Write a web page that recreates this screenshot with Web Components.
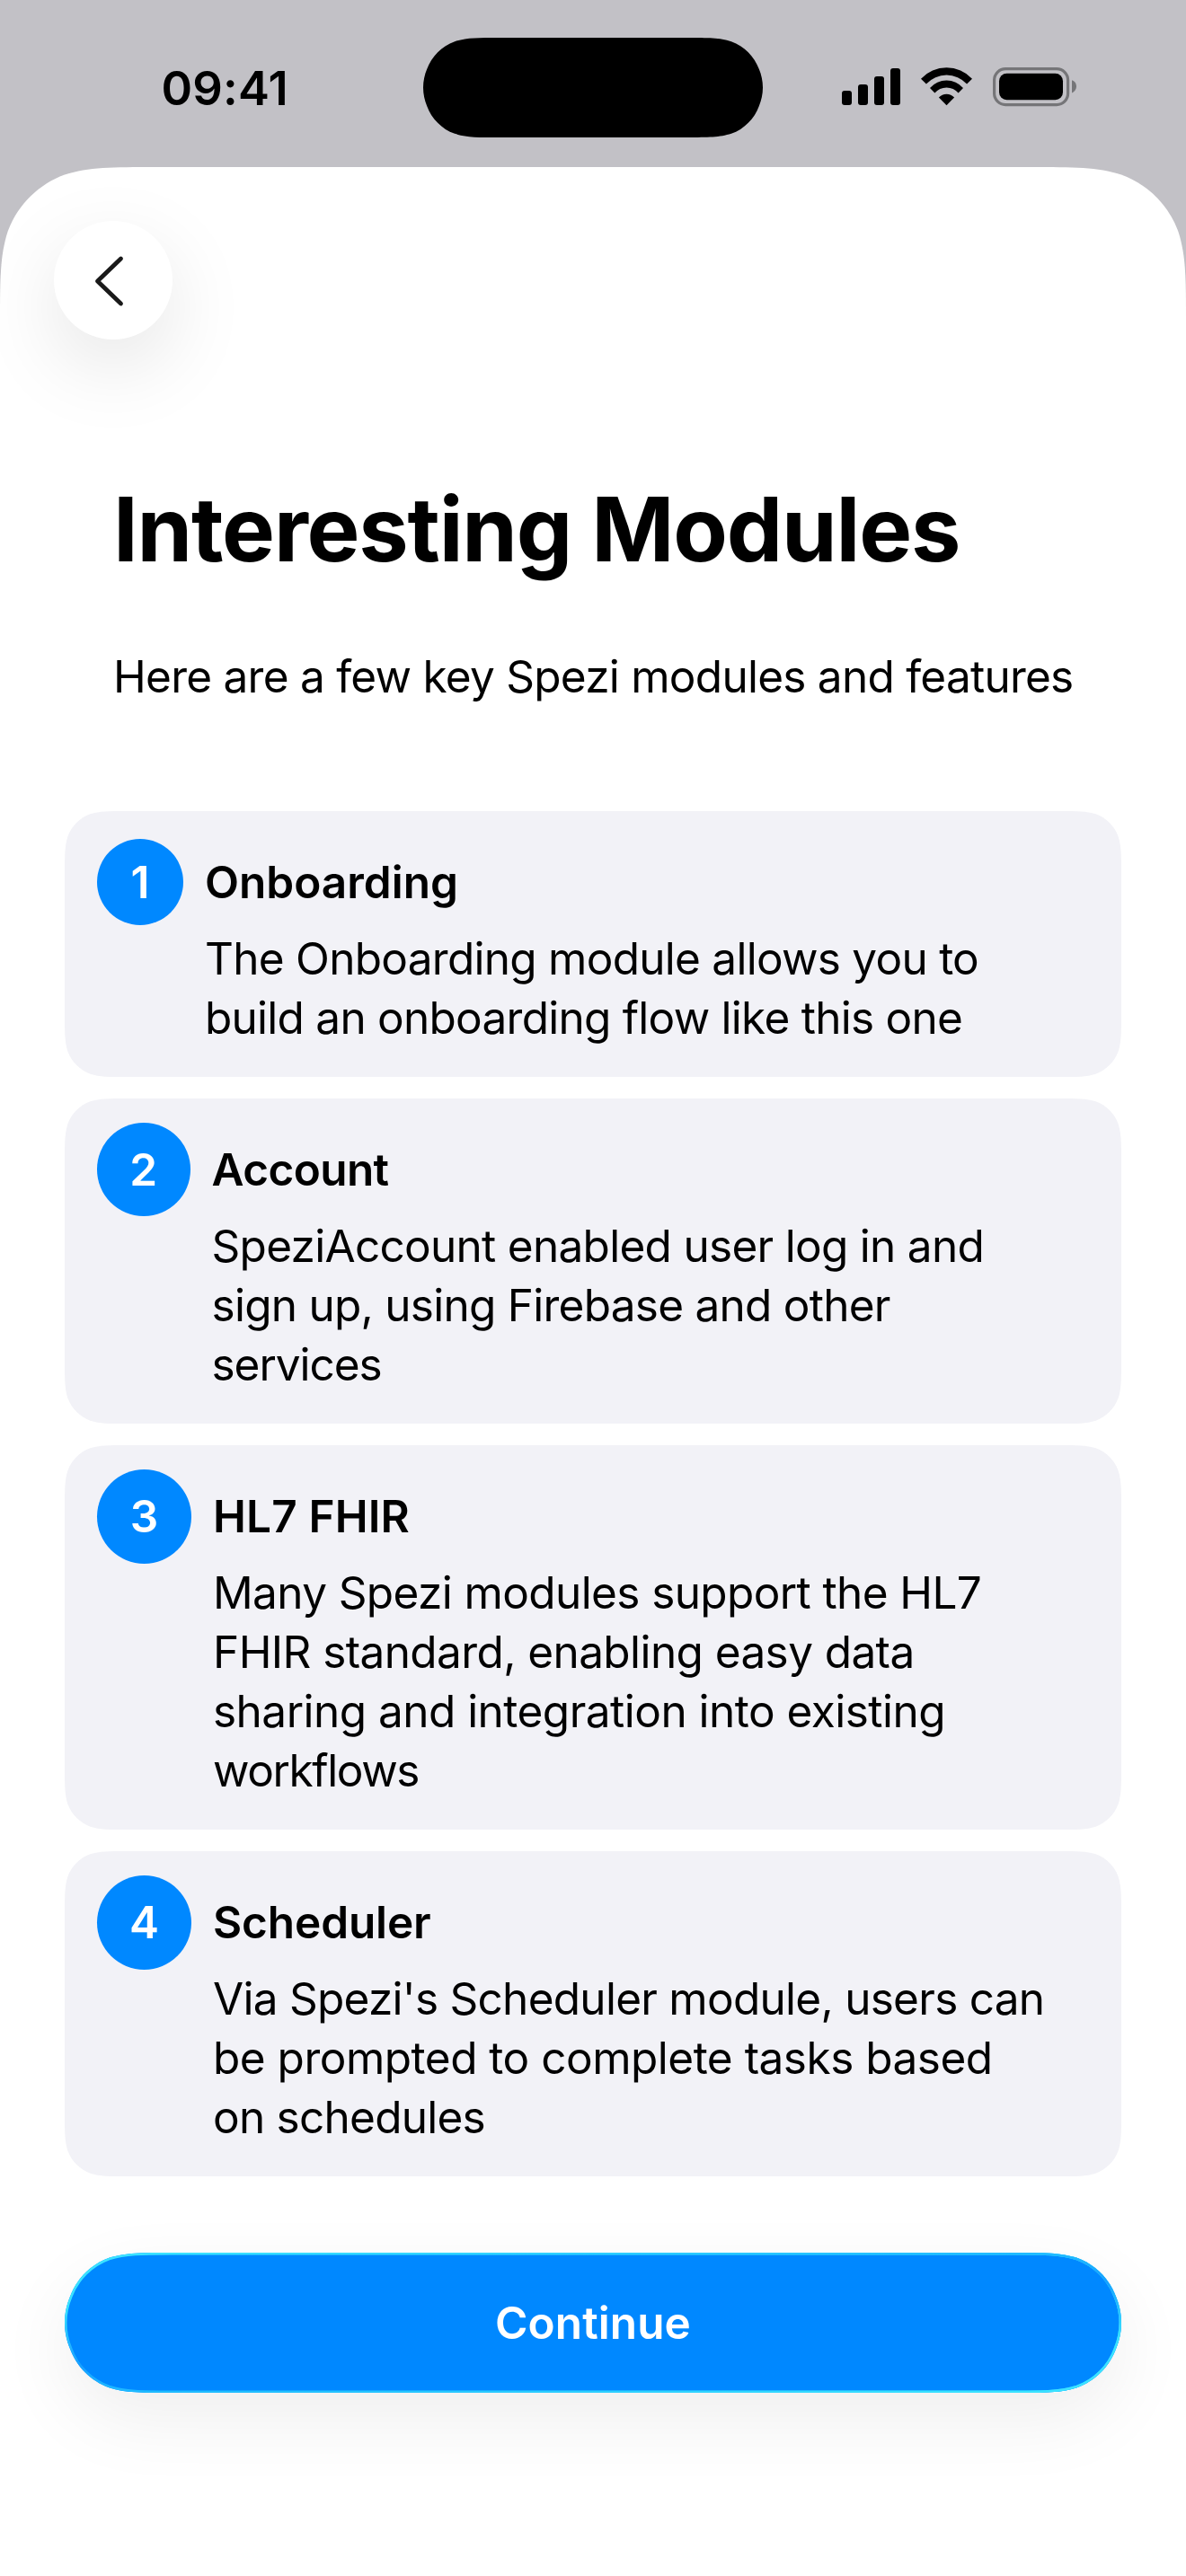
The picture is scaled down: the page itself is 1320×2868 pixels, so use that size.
<!DOCTYPE html>
<html lang="en">
<head>
<meta charset="utf-8">
<title>Interesting Modules</title>
<style>
  html, body { margin: 0; padding: 0; }
  body { width: 1320px; height: 2868px; overflow: hidden; background: #c2c1c6; color: #000;
    font-family: Inter, "Liberation Sans", sans-serif; font-size: 49.5px; line-height: 66px; }
</style>
</head>
<body>
<onboarding-screen></onboarding-screen>
<script>
// Outline of a rounded rectangle with continuous corners.
// When the radius is half the height, the vertical run of each corner stops at the middle.
function smoothPath(w, h, r) {
  const capsule = r * 1.52866483 * 2 > h;
  const e = capsule ? h / 2 : 1.52866483 * r;
  const c1 = capsule ? 0.735 * r : 0.86840694 * r, c2 = capsule ? 0.868 * r : 1.08849296 * r;
  const k = (v) => v * r, n = (v) => +v.toFixed(2);
  const corner = (fx, fy, rev) => {
    const p = [[k(1.52866483), 0], [k(1.08849296), 0], [k(0.86840694), 0], [k(0.63149379), k(0.07491139)],
      [k(0.37282383), k(0.16905956)], [k(0.16905956), k(0.37282383)], [k(0.07491139), k(0.63149379)],
      [capsule ? k(0.03) : 0, c1], [0, c2], [0, e]].map(([x, y]) => `${n(fx(x))} ${n(fy(y))}`);
    if (rev) p.reverse();
    return `${p[0]} C${p.slice(1, 4).join(' ')} C${p.slice(4, 7).join(' ')} C${p.slice(7).join(' ')}`;
  };
  const l = (x) => x, t = (y) => y, R = (x) => w - x, b = (y) => h - y;
  return `M${corner(l, t, true)} L${corner(R, t, false)} L${corner(R, b, true)} L${corner(l, b, false)} Z`;
}

class BaseElement extends HTMLElement {
  constructor() {
    super();
    this.attachShadow({ mode: 'open' }).innerHTML = this.render();
  }
  render() { return ''; }
}

customElements.define('status-bar', class extends BaseElement {
  render() {
    return `<style>
      :host { display: grid; grid-template-columns: 471px 378px 471px; height: 186px; }
      .time { padding: 65px 0 0 179.5px; font-weight: 600; font-size: 52.5px; line-height: 66px; letter-spacing: .2px; }
      .island { padding-top: 42px; }
      .icons { padding: 75px 0 0 88px; }
      svg { display: block; }
    </style>
    <div class="time"><span>09:41</span></div>
    <div class="island"><svg width="378" height="111"><path d="${smoothPath(378, 111, 55.5)}"/></svg></div>
    <div class="icons"><svg width="262" height="44" viewBox="0 0 262 44">
      <rect x="0" y="26" width="11" height="16" rx="3"/>
      <rect x="18" y="19" width="11" height="23" rx="3"/>
      <rect x="36" y="10" width="11" height="32" rx="3"/>
      <rect x="54" y="1" width="11" height="41" rx="3"/>
      <path d="M88 12.7A39 39 0 0 1 145 12.7L139.1 18.4A31 31 0 0 0 93.9 18.4Z"/>
      <path d="M98 23A24.6 24.6 0 0 1 135 23L129.6 28.6A17 17 0 0 0 103.4 28.6Z"/>
      <path d="M107.9 33.6A11.4 11.4 0 0 1 125.1 33.6L116.5 42.2Z"/>
      <rect x="169.6" y="1.6" width="82" height="40" rx="12.5" fill="none" stroke="#757578" stroke-width="3.2"/>
      <rect x="175" y="6.7" width="71" height="29.6" rx="8.5"/>
      <path fill="#757578" d="M256 14.2C259 15 261 18 261 21.3S259 27.2 256 28.4Z"/>
    </svg></div>`;
  }
});

customElements.define('back-button', class extends BaseElement {
  render() {
    return `<style>
      :host { display: flex; width: 132px; height: 132px; border-radius: 50%; background: #fff;
        box-shadow: 0 30px 90px rgba(0,0,0,.1); }
    </style>
    <svg width="132" height="132" fill="none" stroke="#1a1a1a" stroke-width="4.8" stroke-linecap="round" stroke-linejoin="round">
      <path d="M74.5 42L48.5 67L74.5 92"/></svg>`;
  }
});

// One line of text with its own tracking.
customElements.define('text-line', class extends BaseElement {
  render() {
    return `<style>:host { display: block; white-space: nowrap; }</style><slot></slot>`;
  }
  connectedCallback() { this.style.letterSpacing = (this.getAttribute('track') || 0) + 'px'; }
});

customElements.define('module-card', class extends BaseElement {
  render() {
    return `<style>
      :host { display: grid; grid-template: 66px auto / auto 1fr; column-gap: 24px; row-gap: 19px;
        box-sizing: border-box; width: 1176px; padding: 46px 36px 33px; background: #f2f2f7; }
      .badge { display: flex; align-items: center; justify-content: center; align-self: center;
        width: var(--badge); height: var(--badge); border-radius: 50%; background: #08f; color: #fff; font-weight: 600; }
      .title { font-weight: 600; }
      .text { grid-column: 2; }
    </style>
    <div class="badge"><slot name="number"></slot></div>
    <div class="title"><slot name="title"></slot></div>
    <div class="text"><slot></slot></div>`;
  }
  connectedCallback() {
    this.style.setProperty('--badge', this.getAttribute('badge') + 'px');
    const shape = () => { this.style.clipPath = `path("${smoothPath(this.offsetWidth, this.offsetHeight, 45)}")`; };
    new ResizeObserver(shape).observe(this);
  }
});

customElements.define('primary-button', class extends BaseElement {
  render() {
    const d = smoothPath(1176, 156, 78);
    return `<style>
      :host { display: grid; width: 1176px; height: 156px; border-radius: 78px; color: #fff; font-weight: 600;
        box-shadow: 0 30px 84px rgba(0,0,0,.067); }
      svg, .label { grid-area: 1 / 1; }
      .label { display: flex; align-items: center; justify-content: center; }
    </style>
    <svg width="1176" height="156">
      <defs>
        <linearGradient id="left" x1="0" y1="0" x2="0" y2="1">
          <stop offset="0" stop-color="#3be3ff"/><stop offset=".4" stop-color="#3be3ff"/><stop offset=".8" stop-color="#16a0ff"/><stop offset="1" stop-color="#20bcff"/>
        </linearGradient>
        <linearGradient id="right" x1="0" y1="0" x2="0" y2="1">
          <stop offset="0" stop-color="#20bcff"/><stop offset=".2" stop-color="#16a0ff"/><stop offset=".6" stop-color="#3be3ff"/><stop offset="1" stop-color="#3be3ff"/>
        </linearGradient>
        <linearGradient id="fade"><stop offset=".1" stop-color="#000"/><stop offset=".9" stop-color="#fff"/></linearGradient>
        <mask id="m"><rect width="1176" height="156" fill="url(#fade)"/></mask>
        <clipPath id="c"><path d="${d}"/></clipPath>
      </defs>
      <path d="${d}" fill="#08f"/>
      <g clip-path="url(#c)" fill="none" stroke-width="5">
        <path d="${d}" stroke="url(#left)"/>
        <path d="${d}" stroke="url(#right)" mask="url(#m)"/>
      </g>
    </svg>
    <div class="label"><slot></slot></div>`;
  }
});

customElements.define('onboarding-screen', class extends BaseElement {
  render() {
    return `<style>
      :host { display: flex; flex-direction: column; width: 1320px; height: 2868px; }
      .sheet { flex: 1; box-sizing: border-box; display: flex; flex-direction: column; padding: 60px 72px 0; background: #fff;
        clip-path: path("${smoothPath(1320, 3200, 114)}"); }
      back-button { margin-left: -12px; }
      h1 { margin: 151px 0 0 54px; font-size: 99px; line-height: 120px; font-weight: 700; }
      .lead { margin: 71px 0 0 54px; }
      .cards { display: flex; flex-direction: column; gap: 24px; margin: 117px 0 85px; }
    </style>
    <status-bar></status-bar>
    <div class="sheet">
      <back-button></back-button>
      <h1><text-line track="-1.2">Interesting Modules</text-line></h1>
      <div class="lead"><text-line track="-0.74">Here are a few key Spezi modules and features</text-line></div>
      <div class="cards">
        <module-card badge="96"><span slot="number">1</span><text-line slot="title">Onboarding</text-line>
          <text-line track="-0.73">The Onboarding module allows you to</text-line><text-line track="-0.74">build an onboarding flow like this one</text-line></module-card>
        <module-card badge="103.5"><span slot="number">2</span><text-line slot="title" track="-0.6">Account</text-line>
          <text-line track="-0.71">SpeziAccount enabled user log in and</text-line><text-line track="-0.74">sign up, using Firebase and other</text-line><text-line track="-1.04">services</text-line></module-card>
        <module-card badge="105"><span slot="number">3</span><text-line slot="title" track="0.14">HL7 FHIR</text-line>
          <text-line track="-0.61">Many Spezi modules support the HL7</text-line><text-line track="-0.59">FHIR standard, enabling easy data</text-line><text-line track="-0.52">sharing and integration into existing</text-line><text-line track="-1.4">workflows</text-line></module-card>
        <module-card badge="105"><span slot="number">4</span><text-line slot="title" track="-0.12">Scheduler</text-line>
          <text-line track="-0.73">Via Spezi's Scheduler module, users can</text-line><text-line track="-0.5">be prompted to complete tasks based</text-line><text-line track="-0.75">on schedules</text-line></module-card>
      </div>
      <primary-button><text-line track="0.1">Continue</text-line></primary-button>
    </div>`;
  }
});
</script>
</body>
</html>
